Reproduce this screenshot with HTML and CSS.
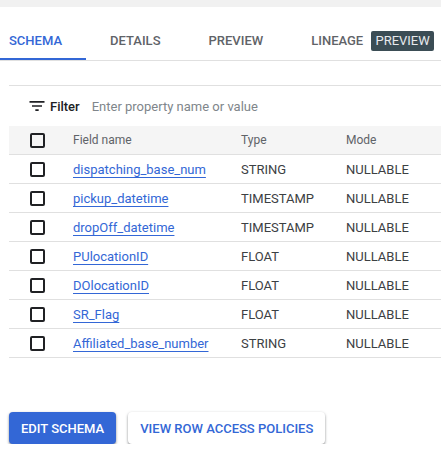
FILE: index.html
```html
<!DOCTYPE html>
<html>
<head>
<meta charset="utf-8">
<link rel="stylesheet" href="styles.css">
</head>
<body>
<div class="topband"></div>
<nav class="tabs">
  <div class="tab active">Schema</div>
  <div class="tab">Details</div>
  <div class="tab">Preview</div>
  <div class="tab">Lineage <span class="badge">Preview</span></div>
</nav>
<main class="content">
  <div class="filter">
    <svg class="filter-icon" width="20" height="20" viewBox="0 0 24 24"><path d="M10 18h4v-2h-4v2zM3 6v2h18V6H3zm3 7h12v-2H6v2z" fill="#202124"/></svg>
    <span class="filter-label">Filter</span>
    <span class="filter-placeholder">Enter property name or value</span>
  </div>
  <div class="table">
    <div class="row head">
      <div class="cell cb"><span class="box"></span></div>
      <div class="cell">Field name</div>
      <div class="cell">Type</div>
      <div class="cell">Mode</div>
    </div>
    <div class="row">
      <div class="cell cb"><span class="box"></span></div>
      <div class="cell"><a class="link">dispatching_base_num</a></div>
      <div class="cell">STRING</div>
      <div class="cell">NULLABLE</div>
    </div>
    <div class="row">
      <div class="cell cb"><span class="box"></span></div>
      <div class="cell"><a class="link">pickup_datetime</a></div>
      <div class="cell">TIMESTAMP</div>
      <div class="cell">NULLABLE</div>
    </div>
    <div class="row">
      <div class="cell cb"><span class="box"></span></div>
      <div class="cell"><a class="link">dropOff_datetime</a></div>
      <div class="cell">TIMESTAMP</div>
      <div class="cell">NULLABLE</div>
    </div>
    <div class="row">
      <div class="cell cb"><span class="box"></span></div>
      <div class="cell"><a class="link">PUlocationID</a></div>
      <div class="cell">FLOAT</div>
      <div class="cell">NULLABLE</div>
    </div>
    <div class="row">
      <div class="cell cb"><span class="box"></span></div>
      <div class="cell"><a class="link">DOlocationID</a></div>
      <div class="cell">FLOAT</div>
      <div class="cell">NULLABLE</div>
    </div>
    <div class="row">
      <div class="cell cb"><span class="box"></span></div>
      <div class="cell"><a class="link">SR_Flag</a></div>
      <div class="cell">FLOAT</div>
      <div class="cell">NULLABLE</div>
    </div>
    <div class="row">
      <div class="cell cb"><span class="box"></span></div>
      <div class="cell"><a class="link">Affiliated_base_number</a></div>
      <div class="cell">STRING</div>
      <div class="cell">NULLABLE</div>
    </div>
  </div>
  <div class="actions">
    <button class="btn primary">Edit schema</button>
    <button class="btn secondary">View row access policies</button>
  </div>
</main>
</body>
</html>
```
FILE: styles.css
```css
html, body {
  margin: 0;
  padding: 0;
  background: #fff;
  font-family: Roboto, "Liberation Sans", Arial, sans-serif;
  color: #202124;
  overflow: hidden;
}
.topband {
  height: 7px;
  background: #f1f1f1;
}
.tabs {
  display: flex;
  height: 54px;
  box-sizing: border-box;
  border-bottom: 1px solid #e0e0e0;
}
.tab {
  box-sizing: border-box;
  height: 53px;
  padding: 24px 24px 0;
  line-height: 20px;
  font-size: 13px;
  font-weight: 500;
  text-transform: uppercase;
  color: #5f6368;
  white-space: nowrap;
}
.tab:first-child {
  padding-left: 9px;
}
.tab.active {
  color: #3367d6;
  border-bottom: 2px solid #3367d6;
}
.badge {
  display: inline-block;
  margin-left: 5px;
  padding: 0 4px;
  line-height: 20px;
  border-radius: 2px;
  background: #3b4d55;
  color: #e8eaed;
  font-weight: 400;
}
.content {
  padding: 24px 0 0 9px;
}
.filter {
  display: flex;
  align-items: center;
  height: 40px;
  border-top: 1px solid #e0e0e0;
  padding-left: 18px;
  font-size: 13px;
}
.filter-icon {
  margin-right: 3px;
}
.filter-label {
  font-weight: 500;
  color: #202124;
  margin-right: 12px;
}
.filter-placeholder {
  color: #80868b;
}
.table {
  display: flex;
  flex-direction: column;
}
.row {
  display: grid;
  grid-template-columns: 64px 168px 105px 1fr;
  height: 29px;
  box-sizing: border-box;
  border-bottom: 1px solid #e0e0e0;
  align-items: center;
  font-size: 13px;
  color: #3c4043;
}
.row.head {
  background: #f5f5f5;
  font-size: 12px;
  font-weight: 400;
  color: #5f6368;
}
.cell.cb {
  padding-left: 21px;
  display: flex;
  align-items: center;
}
.box {
  width: 15px;
  height: 15px;
  box-sizing: border-box;
  border: 2px solid #202124;
  border-radius: 2px;
}
.link {
  color: #3367d6;
  text-decoration: underline;
  text-underline-offset: 3px;
}
.actions {
  display: flex;
  gap: 12px;
  margin-top: 54px;
}
.btn {
  height: 32px;
  padding: 0 12px;
  border: none;
  border-radius: 4px;
  font-family: inherit;
  font-size: 13px;
  font-weight: 500;
  text-transform: uppercase;
  letter-spacing: 0;
  box-shadow: 0 1px 3px rgba(60,64,67,0.4), 0 2px 2px rgba(60,64,67,0.25);
}
.btn.primary {
  background: #3367d6;
  color: #fff;
}
.btn.secondary {
  background: #fff;
  color: #3367d6;
}
```
